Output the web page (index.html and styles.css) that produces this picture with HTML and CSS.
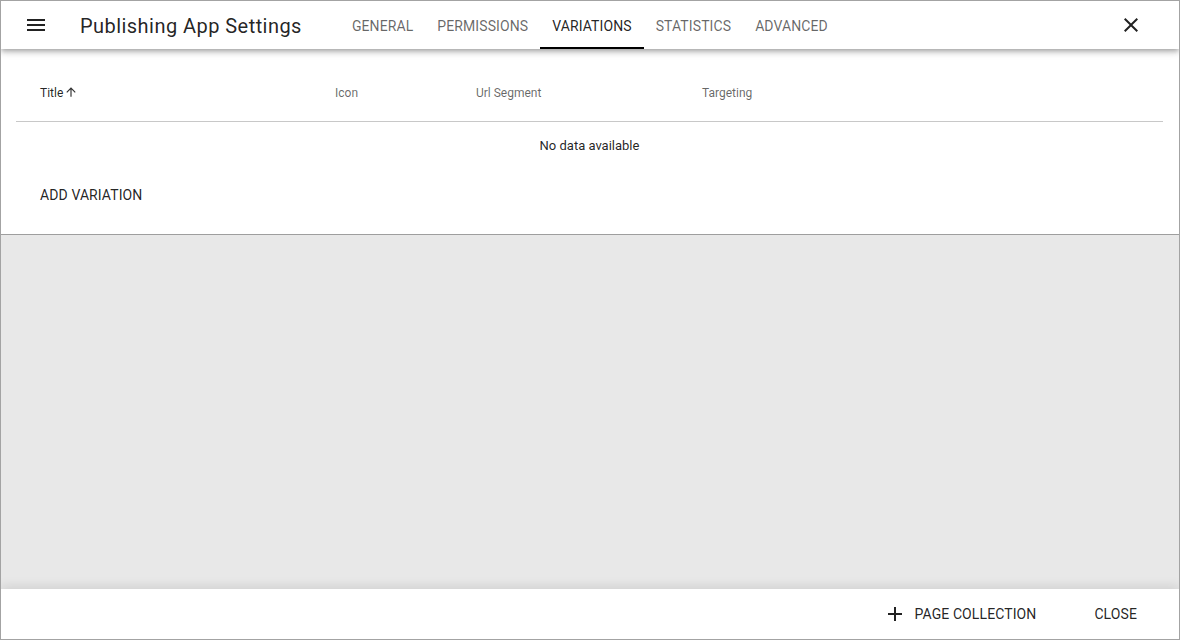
FILE: index.html
```html
<!DOCTYPE html>
<html>
<head>
<meta charset="utf-8">
<link rel="stylesheet" href="styles.css">
</head>
<body>
<div class="dialog">
  <header class="toolbar">
    <button class="icon-btn menu" aria-label="menu">
      <svg viewBox="0 0 24 24" width="24" height="24"><path d="M3 6h18v2H3zm0 5h18v2H3zm0 5h18v2H3z" fill="#222"/></svg>
    </button>
    <div class="title">Publishing App Settings</div>
    <nav class="tabs">
      <div class="tab">General</div>
      <div class="tab">Permissions</div>
      <div class="tab active">Variations</div>
      <div class="tab">Statistics</div>
      <div class="tab">Advanced</div>
    </nav>
    <div class="spacer"></div>
    <button class="icon-btn close" aria-label="close">
      <svg viewBox="0 0 24 24" width="24" height="24"><path d="M19 6.41 17.59 5 12 10.59 6.41 5 5 6.41 10.59 12 5 17.59 6.41 19 12 13.41 17.59 19 19 17.59 13.41 12z" fill="#222"/></svg>
    </button>
  </header>
  <section class="card">
    <table class="table">
      <colgroup>
        <col class="c1"><col class="c2"><col class="c3"><col>
      </colgroup>
      <thead>
        <tr>
          <th class="sorted">Title<svg viewBox="0 0 24 24" width="14" height="14"><path d="M4 12l1.41 1.41L11 7.83V20h2V7.83l5.58 5.59L20 12l-8-8-8 8z" fill="#333"/></svg></th>
          <th>Icon</th>
          <th>Url Segment</th>
          <th>Targeting</th>
        </tr>
      </thead>
      <tbody>
        <tr><td colspan="4" class="empty">No data available</td></tr>
      </tbody>
    </table>
    <div class="card-actions">
      <button class="text-btn">Add Variation</button>
    </div>
  </section>
  <div class="fill"></div>
  <footer class="footer">
    <button class="text-btn icon-text">
      <svg viewBox="0 0 24 24" width="24" height="24"><path d="M19 13h-6v6h-2v-6H5v-2h6V5h2v6h6v2z" fill="#222"/></svg>
      Page Collection
    </button>
    <button class="text-btn">Close</button>
  </footer>
</div>
</body>
</html>
```

FILE: styles.css
```css
* { box-sizing: border-box; }
html, body { margin: 0; padding: 0; }
body {
  font-family: Roboto, "Noto Sans", sans-serif;
  color: rgba(0,0,0,0.87);
  background: #fff;
}
button {
  font-family: inherit;
  border: 0;
  background: none;
  padding: 0;
  cursor: pointer;
}
.dialog {
  width: 1180px;
  height: 640px;
  border: 1px solid #a3a3a3;
  display: flex;
  flex-direction: column;
  background: #e8e8e8;
  overflow: hidden;
}
.toolbar {
  height: 48px;
  flex: none;
  display: flex;
  align-items: center;
  background: #fff;
  position: relative;
  z-index: 2;
  box-shadow: 0 2px 4px -1px rgba(0,0,0,.2), 0 4px 5px 0 rgba(0,0,0,.14), 0 1px 10px 0 rgba(0,0,0,.12);
  padding: 0 12px;
}
.icon-btn {
  width: 48px;
  height: 48px;
  display: flex;
  align-items: center;
  justify-content: center;
}
.menu { margin-left: -1px; }
.title {
  font-size: 20px;
  margin-left: 20px;
  letter-spacing: 0.45px;
  color: rgba(0,0,0,0.87);
  white-space: nowrap;
  padding-top: 1px;
}
.tabs {
  display: flex;
  height: 48px;
  margin-left: 38px;
}
.tab {
  padding: 1px 12px 0;
  height: 48px;
  display: flex;
  align-items: center;
  justify-content: center;
  text-transform: uppercase;
  font-size: 14px;
  letter-spacing: 0.1px;
  color: rgba(0,0,0,0.6);
  position: relative;
}
.tab.active {
  color: rgba(0,0,0,0.87);
}
.tab.active::after {
  content: "";
  position: absolute;
  left: 0;
  right: 0;
  bottom: 0;
  height: 2px;
  background: #000;
}
.spacer { flex: 1; }
.close { margin-right: 12px; }

.card {
  flex: none;
  background: #fff;
  padding: 16px 16px 21px 15px;
  border-bottom: 1px solid #9e9e9e;
  position: relative;
  z-index: 1;
}
.table {
  width: 100%;
  border-collapse: collapse;
  table-layout: fixed;
}
.c1 { width: 295px; }
.c2 { width: 141px; }
.c3 { width: 226px; }
th {
  height: 56px;
  text-align: left;
  font-size: 12px;
  font-weight: 400;
  color: rgba(0,0,0,0.6);
  padding: 0 24px;
  border-bottom: 1px solid #c8c8c8;
  white-space: nowrap;
}
th.sorted { color: rgba(0,0,0,0.87); }
th svg { vertical-align: -2px; margin-left: 1px; }
td.empty {
  height: 48px;
  text-align: center;
  font-size: 13px;
  color: rgba(0,0,0,0.87);
}
.card-actions {
  display: flex;
  padding: 0 8px;
  margin-top: 8px;
}
.text-btn {
  height: 36px;
  padding: 0 16px;
  font-size: 14px;
  font-weight: 400;
  letter-spacing: 0.1px;
  text-transform: uppercase;
  color: rgba(0,0,0,0.87);
  display: inline-flex;
  align-items: center;
}
.fill {
  flex: 1;
}
.footer {
  height: 50px;
  flex: none;
  background: #fff;
  display: flex;
  align-items: center;
  justify-content: flex-end;
  padding: 0 26px 0 0;
  gap: 26px;
  box-shadow: 0 -3px 10px rgba(0,0,0,0.1);
  position: relative;
}
.icon-text svg { margin-right: 8px; margin-left: -4px; }
```
